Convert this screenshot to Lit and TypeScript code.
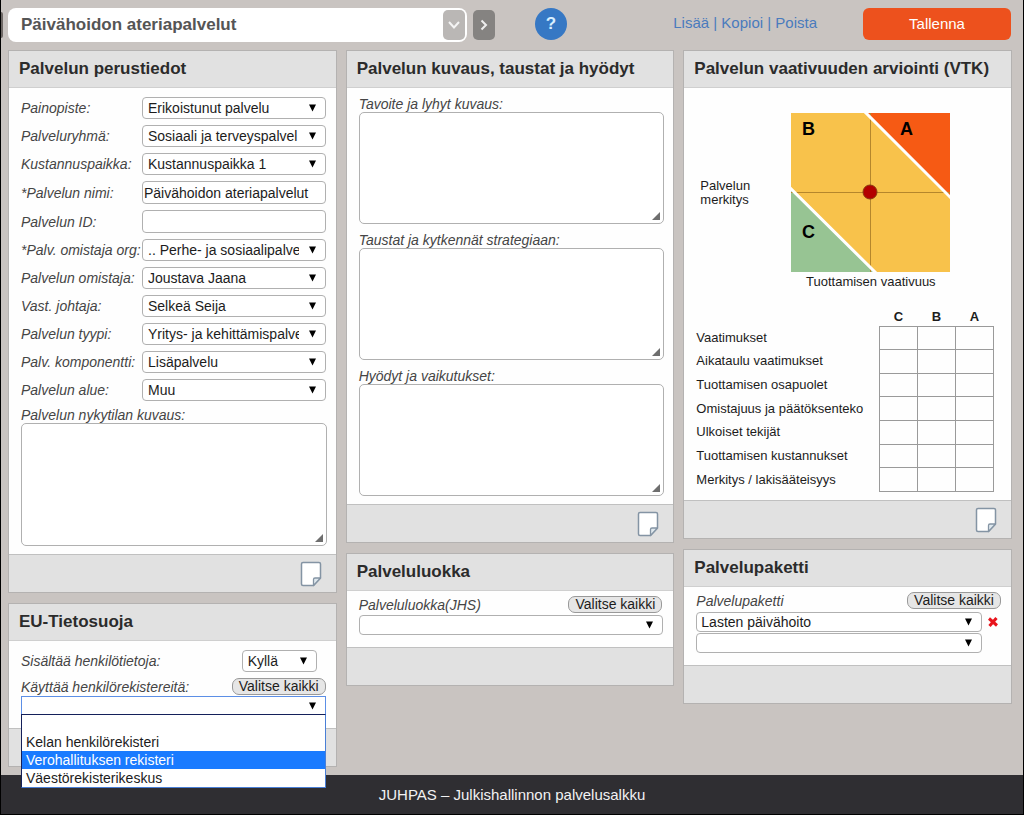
import { LitElement, html, svg, css, nothing } from "lit";
import { customElement, property, state } from "lit/decorators.js";
import { classMap } from "lit/directives/class-map.js";

interface Field {
  id: string;
  label: string;
  value: string;
  kind: "select" | "text";
}

const BASIC_FIELDS: Field[] = [
  { id: "painopiste", label: "Painopiste:", value: "Erikoistunut palvelu", kind: "select" },
  { id: "ryhma", label: "Palveluryhmä:", value: "Sosiaali ja terveyspalvel", kind: "select" },
  { id: "kustannuspaikka", label: "Kustannuspaikka:", value: "Kustannuspaikka 1", kind: "select" },
  { id: "nimi", label: "*Palvelun nimi:", value: "Päivähoidon ateriapalvelut", kind: "text" },
  { id: "tunnus", label: "Palvelun ID:", value: "", kind: "text" },
  { id: "org", label: "*Palv. omistaja org:", value: ".. Perhe- ja sosiaalipalvelut", kind: "select" },
  { id: "omistaja", label: "Palvelun omistaja:", value: "Joustava Jaana", kind: "select" },
  { id: "johtaja", label: "Vast. johtaja:", value: "Selkeä Seija", kind: "select" },
  { id: "tyyppi", label: "Palvelun tyypi:", value: "Yritys- ja kehittämispalvelut", kind: "select" },
  { id: "komponentti", label: "Palv. komponentti:", value: "Lisäpalvelu", kind: "select" },
  { id: "alue", label: "Palvelun alue:", value: "Muu", kind: "select" },
];

const DESCRIPTIONS = [
  { id: "tavoite", label: "Tavoite ja lyhyt kuvaus:" },
  { id: "taustat", label: "Taustat ja kytkennät strategiaan:" },
  { id: "hyodyt", label: "Hyödyt ja vaikutukset:" },
];

const CRITERIA = [
  "Vaatimukset",
  "Aikataulu vaatimukset",
  "Tuottamisen osapuolet",
  "Omistajuus ja päätöksenteko",
  "Ulkoiset tekijät",
  "Tuottamisen kustannukset",
  "Merkitys / lakisääteisyys",
];

const GRADES = ["C", "B", "A"];

const REGISTERS = ["", "Kelan henkilörekisteri", "Verohallituksen rekisteri", "Väestörekisterikeskus"];

@customElement("service-panel")
class ServicePanel extends LitElement {
  @property() heading = "";
  @property({ type: Boolean }) note = false;

  static styles = css`
    :host {
      display: block;
      background: #fefefe;
      border: 1px solid #b4b2b1;
    }
    .head {
      box-sizing: border-box;
      height: 37px;
      padding: 0 10px;
      display: flex;
      align-items: center;
      background: #e1e1e1;
      border-bottom: 1px solid #cfcfcf;
    }
    h2 {
      margin: 0;
      font-size: 17px;
      line-height: 20px;
      color: #2b2b2b;
      white-space: nowrap;
    }
    .body {
      padding: 5px 9px 8px 12px;
    }
    .foot {
      box-sizing: border-box;
      height: 38px;
      padding: 0 14px;
      display: flex;
      align-items: center;
      justify-content: flex-end;
      background: #e1e1e1;
      border-top: 1px solid #c0c0c0;
    }
    .note {
      display: flex;
      padding: 0;
      border: 0;
      background: none;
    }
  `;

  render() {
    return html`
      <header class="head"><h2>${this.heading}</h2></header>
      <div class="body"><slot></slot></div>
      <footer class="foot">
        ${this.note
          ? html`<button class="note" type="button" aria-label="Muistiinpano">
              <svg width="22" height="26" viewBox="0 0 22 26">
                <path d="M3 1.500H19Q20.500 1.500 20.500 3V17L13.500 24.500H3Q1.500 24.500 1.500 23V3Q1.500 1.500 3 1.500Z" fill="#fff" stroke="#8494a4" stroke-width="1.500" />
                <path d="M20.500 17H15Q13.500 17 13.500 18.500V24.500Z" fill="#dfe8ee" stroke="#8494a4" stroke-width="1.300" stroke-linejoin="round" />
              </svg>
            </button>`
          : nothing}
      </footer>
    `;
  }
}

@customElement("app-root")
class AppRoot extends LitElement {
  @state() private highlighted = 2;

  static styles = css`
    :host {
      display: block;
      font-family: "Liberation Sans", Arial, sans-serif;
      font-size: 14px;
      line-height: 16px;
      color: #1c1c1c;
    }
    *,
    *::before {
      box-sizing: border-box;
    }
    button,
    input,
    select,
    textarea {
      font: inherit;
      color: inherit;
      margin: 0;
    }
    .page {
      min-height: 100vh;
      display: flex;
      flex-direction: column;
      background: #c9c4c1;
      border: solid #000;
      border-width: 0 1px 1px;
    }
    .toolbar {
      display: flex;
      align-items: flex-start;
      padding: 8px 12px 8px 0;
    }
    .prev {
      width: 2px;
      height: 26px;
      margin: 4px 5px 0 0;
      padding: 0;
      border: 0;
      border-radius: 0 3px 3px 0;
      background: #6f6966;
    }
    .picker {
      flex: 0 1 459px;
      height: 34px;
      display: flex;
      align-items: center;
      padding: 2px;
      background: #fff;
      border-radius: 8px;
    }
    .picker-name {
      flex: 1;
      min-width: 0;
      padding: 0 11px;
      border: 0;
      background: none;
      font-size: 17px;
      font-weight: bold;
      color: #555;
      outline: none;
    }
    .square {
      flex: none;
      width: 22px;
      height: 30px;
      display: flex;
      align-items: center;
      justify-content: center;
      padding: 0;
      border: 0;
      border-radius: 5px;
      background: #bab7b5;
    }
    .next {
      margin: 2px 0 0 6px;
      background: #858381;
    }
    .help {
      flex: none;
      width: 32px;
      height: 32px;
      margin-left: 40px;
      padding: 0;
      border: 0;
      border-radius: 50%;
      background: #3678c4;
      color: #d9efff;
      font-size: 17px;
      font-weight: bold;
    }
    .links {
      margin-left: auto;
      padding-top: 5px;
      font-size: 15px;
      line-height: 20px;
      color: #4a7bbd;
      white-space: nowrap;
    }
    .links a {
      color: inherit;
      text-decoration: none;
    }
    .save {
      flex: none;
      width: 148px;
      height: 32px;
      margin-left: 46px;
      padding: 0;
      border: 0;
      border-radius: 6px;
      background: #ed511d;
      color: #fff;
      font-size: 15px;
    }
    .columns {
      flex: 1;
      display: grid;
      grid-template-columns: repeat(3, minmax(0, 1fr));
      align-items: start;
      gap: 9px;
      padding: 0 11px 8px 7px;
    }
    .column {
      display: grid;
      gap: 10px;
    }
    label {
      font-style: italic;
      color: #454545;
      white-space: nowrap;
    }
    .fields {
      display: grid;
      gap: 6px;
      padding: 4px 1px 6px 0;
    }
    .field {
      display: grid;
      grid-template-columns: 121px minmax(0, 1fr);
      align-items: center;
    }
    .choice {
      display: grid;
      align-items: center;
    }
    .choice > * {
      grid-area: 1 / 1;
    }
    .arrow {
      justify-self: end;
      margin-right: 9px;
      pointer-events: none;
    }
    select {
      appearance: none;
      width: 100%;
      min-width: 0;
      height: 22px;
      padding: 0 26px 0 5px;
      border: 1px solid #b0b0b0;
      border-radius: 4px;
      background: #fff;
      outline: none;
    }
    .wide select {
      height: 20px;
      padding-left: 4px;
    }
    .text {
      width: 100%;
      height: 23px;
      padding: 0 1px;
      border: 1px solid #b0b0b0;
      border-radius: 4px;
      background: #fff;
      outline: none;
    }
    .area {
      display: grid;
    }
    .area label {
      grid-area: 1 / 1;
    }
    .area textarea {
      grid-area: 2 / 1;
      width: 100%;
      height: 112px;
      border: 1px solid #b0b0b0;
      border-radius: 5px;
      background: #fff;
      resize: none;
      outline: none;
    }
    .area.tall textarea {
      height: 123px;
    }
    .grip {
      grid-area: 2 / 1;
      place-self: end;
      margin: 4px;
      pointer-events: none;
    }
    .areas {
      display: grid;
      gap: 8px;
      padding-top: 3px;
    }
    .line {
      display: flex;
      justify-content: space-between;
      align-items: flex-end;
      padding-right: 1px;
    }
    .all {
      height: 17px;
      padding: 0 6px;
      border: 1px solid #999;
      border-radius: 7px;
      background: #e6e6e6;
      line-height: 15px;
      white-space: nowrap;
    }
    .yes {
      width: 75px;
    }
    .privacy {
      padding: 4px 0;
    }
    .privacy .line:first-child {
      align-items: center;
      padding-right: 10px;
      margin-bottom: 6px;
    }
    .combo {
      position: relative;
      margin: 1px 1px 0 0;
    }
    .combo .wide select {
      border-color: #5c8fe6;
      border-radius: 0;
    }
    .list {
      position: absolute;
      top: 18px;
      left: 0;
      right: 0;
      z-index: 2;
      margin: 0;
      padding: 0;
      list-style: none;
      background: #fff;
      border: 1px solid #4a7fd6;
      border-top-color: #14205a;
      border-left-color: #14205a;
    }
    .list li {
      height: 18px;
      padding: 0 4px;
      line-height: 18px;
    }
    .list .active {
      background: #1a7bff;
      color: #fff;
    }
    .class-group {
      padding: 0 1px 4px 0;
    }
    .class-group .wide {
      margin-top: 2px;
    }
    .package {
      display: grid;
      grid-template-columns: minmax(0, 1fr) 20px;
      gap: 1px 0;
      align-items: center;
      padding-bottom: 4px;
    }
    .package .line {
      grid-column: 1 / -1;
      margin-bottom: 2px;
    }
    .remove {
      display: flex;
      justify-content: flex-end;
      padding: 0 4px 0 0;
      border: 0;
      background: none;
    }
    .chart {
      display: grid;
      grid-template-columns: 95px 159px;
      align-items: center;
      row-gap: 3px;
      margin: 0;
      padding: 20px 0 20px;
      font-size: 13px;
      line-height: 14px;
    }
    .axis-y {
      width: 60px;
      margin-left: 4px;
    }
    .axis-x {
      grid-column: 2;
      text-align: center;
      white-space: nowrap;
    }
    .plot {
      display: block;
    }
    .grades {
      width: calc(100% - 8px);
      height: 183px;
      border-collapse: collapse;
      font-size: 13px;
      line-height: 16px;
    }
    .grades th {
      padding: 0;
      text-align: left;
      font-weight: normal;
      white-space: nowrap;
    }
    .grades thead th {
      height: 17px;
      text-align: center;
      font-weight: bold;
    }
    .grades td {
      width: 38px;
      padding: 0;
      border: 1px solid #9a9a9a;
    }
    .bottom {
      flex: none;
      height: 39px;
      display: flex;
      align-items: center;
      justify-content: center;
      background: #2f2e32;
      color: #f2f2f2;
      font-size: 15px;
    }
  `;

  private arrow() {
    return html`<svg class="arrow" width="9" height="8" viewBox="0 0 9 8" aria-hidden="true">
      <path d="M1 0.500H8L4.500 7.500Z" fill="#000" />
    </svg>`;
  }

  private select(id: string, value: string, wide = false, label?: string) {
    return html`<div class=${classMap({ choice: true, wide })}>
      <select id=${id} aria-label=${label ?? nothing}>
        <option>${value}</option>
      </select>
      ${this.arrow()}
    </div>`;
  }

  private area(id: string, label: string, tall = false) {
    return html`<div class=${classMap({ area: true, tall })}>
      <label for=${id}>${label}</label>
      <textarea id=${id}></textarea>
      <svg class="grip" width="8" height="8" viewBox="0 0 8 8" aria-hidden="true">
        <path d="M8 0V8H0Z" fill="#6e6e6e" />
      </svg>
    </div>`;
  }

  private chart() {
    return html`<figure class="chart">
      <div class="axis-y">Palvelun merkitys</div>
      ${svg`<svg class="plot" width="159" height="159" viewBox="0 0 159 159" role="img" aria-label="Palvelun vaativuus">
        <rect width="159" height="159" fill="#f8c24b" />
        <path d="M76 0H159V84Z" fill="#f65a14" />
        <path d="M0 77L83 159H0Z" fill="#97c493" />
        <path d="M79 0V159M0 79H159" stroke="#b5862c" stroke-width="1" shape-rendering="crispEdges" />
        <path d="M72 -3L162 87M-3 73L87 162" stroke="#fff" stroke-width="3" />
        <circle cx="79" cy="79" r="7" fill="#b30000" stroke="#8a3a10" stroke-width="1" />
        <text x="11" y="22" font-size="18" font-weight="bold">B</text>
        <text x="109" y="22" font-size="18" font-weight="bold">A</text>
        <text x="11" y="125" font-size="18" font-weight="bold">C</text>
      </svg>`}
      <figcaption class="axis-x">Tuottamisen vaativuus</figcaption>
    </figure>`;
  }

  render() {
    return html`<div class="page">
      <header class="toolbar">
        <button class="prev" type="button" aria-label="Edellinen"></button>
        <div class="picker">
          <input class="picker-name" aria-label="Palvelu" .value=${"Päivähoidon ateriapalvelut"} />
          <button class="square" type="button" aria-label="Avaa luettelo">
            <svg width="14" height="10" viewBox="0 0 14 10"><path d="M2 2L7 7.500L12 2" fill="none" stroke="#f4f4f4" stroke-width="2" /></svg>
          </button>
        </div>
        <button class="square next" type="button" aria-label="Seuraava">
          <svg width="8" height="12" viewBox="0 0 8 12"><path d="M1.500 1.500L6 6L1.500 10.500" fill="none" stroke="#eee" stroke-width="2" /></svg>
        </button>
        <button class="help" type="button">?</button>
        <nav class="links"><a href="#lisaa">Lisää</a> | <a href="#kopioi">Kopioi</a> | <a href="#poista">Poista</a></nav>
        <button class="save" type="button">Tallenna</button>
      </header>

      <main class="columns">
        <div class="column">
          <service-panel heading="Palvelun perustiedot" note>
            <div class="fields">
              ${BASIC_FIELDS.map(
                (f) => html`<div class="field">
                  <label for=${f.id}>${f.label}</label>
                  ${f.kind === "select"
                    ? this.select(f.id, f.value)
                    : html`<input class="text" id=${f.id} .value=${f.value} />`}
                </div>`
              )}
            </div>
            ${this.area("nykytila", "Palvelun nykytilan kuvaus:", true)}
          </service-panel>

          <service-panel heading="EU-Tietosuoja">
            <div class="privacy">
              <div class="line">
                <label for="henkilotiedot">Sisältää henkilötietoja:</label>
                <div class="yes">${this.select("henkilotiedot", "Kyllä")}</div>
              </div>
              <div class="line">
                <label for="rekisterit">Käyttää henkilörekistereitä:</label>
                <button class="all" type="button">Valitse kaikki</button>
              </div>
              <div class="combo">
                ${this.select("rekisterit", "", true)}
                <ul class="list" role="listbox" aria-label="Rekisterit">
                  ${REGISTERS.map(
                    (r, i) => html`<li
                      role="option"
                      aria-selected=${i === this.highlighted}
                      class=${classMap({ active: i === this.highlighted })}
                      @mouseenter=${() => (this.highlighted = i)}
                    >${r}</li>`
                  )}
                </ul>
              </div>
            </div>
          </service-panel>
        </div>

        <div class="column">
          <service-panel heading="Palvelun kuvaus, taustat ja hyödyt" note>
            <div class="areas">${DESCRIPTIONS.map((d) => this.area(d.id, d.label))}</div>
          </service-panel>

          <service-panel heading="Palveluluokka">
            <div class="class-group">
              <div class="line">
                <label for="luokka">Palveluluokka(JHS)</label>
                <button class="all" type="button">Valitse kaikki</button>
              </div>
              ${this.select("luokka", "", true)}
            </div>
          </service-panel>
        </div>

        <div class="column">
          <service-panel heading="Palvelun vaativuuden arviointi (VTK)" note>
            ${this.chart()}
            <table class="grades">
              <thead>
                <tr>
                  <th></th>
                  ${GRADES.map((g) => html`<th scope="col">${g}</th>`)}
                </tr>
              </thead>
              <tbody>
                ${CRITERIA.map(
                  (c) => html`<tr><th scope="row">${c}</th>${GRADES.map(() => html`<td></td>`)}</tr>`
                )}
              </tbody>
            </table>
          </service-panel>

          <service-panel heading="Palvelupaketti">
            <div class="package">
              <div class="line">
                <label for="paketti">Palvelupaketti</label>
                <button class="all" type="button">Valitse kaikki</button>
              </div>
              ${this.select("paketti", "Lasten päivähoito", true)}
              <button class="remove" type="button" aria-label="Poista paketti">
                <svg width="10" height="10" viewBox="0 0 10 10"><path d="M1 1.500L9 8.500M8.500 1L1.500 9" stroke="#e8141c" stroke-width="3" /></svg>
              </button>
              ${this.select("paketti2", "", true, "Toinen palvelupaketti")}
            </div>
          </service-panel>
        </div>
      </main>

      <footer class="bottom">JUHPAS – Julkishallinnon palvelusalkku</footer>
    </div>`;
  }
}
